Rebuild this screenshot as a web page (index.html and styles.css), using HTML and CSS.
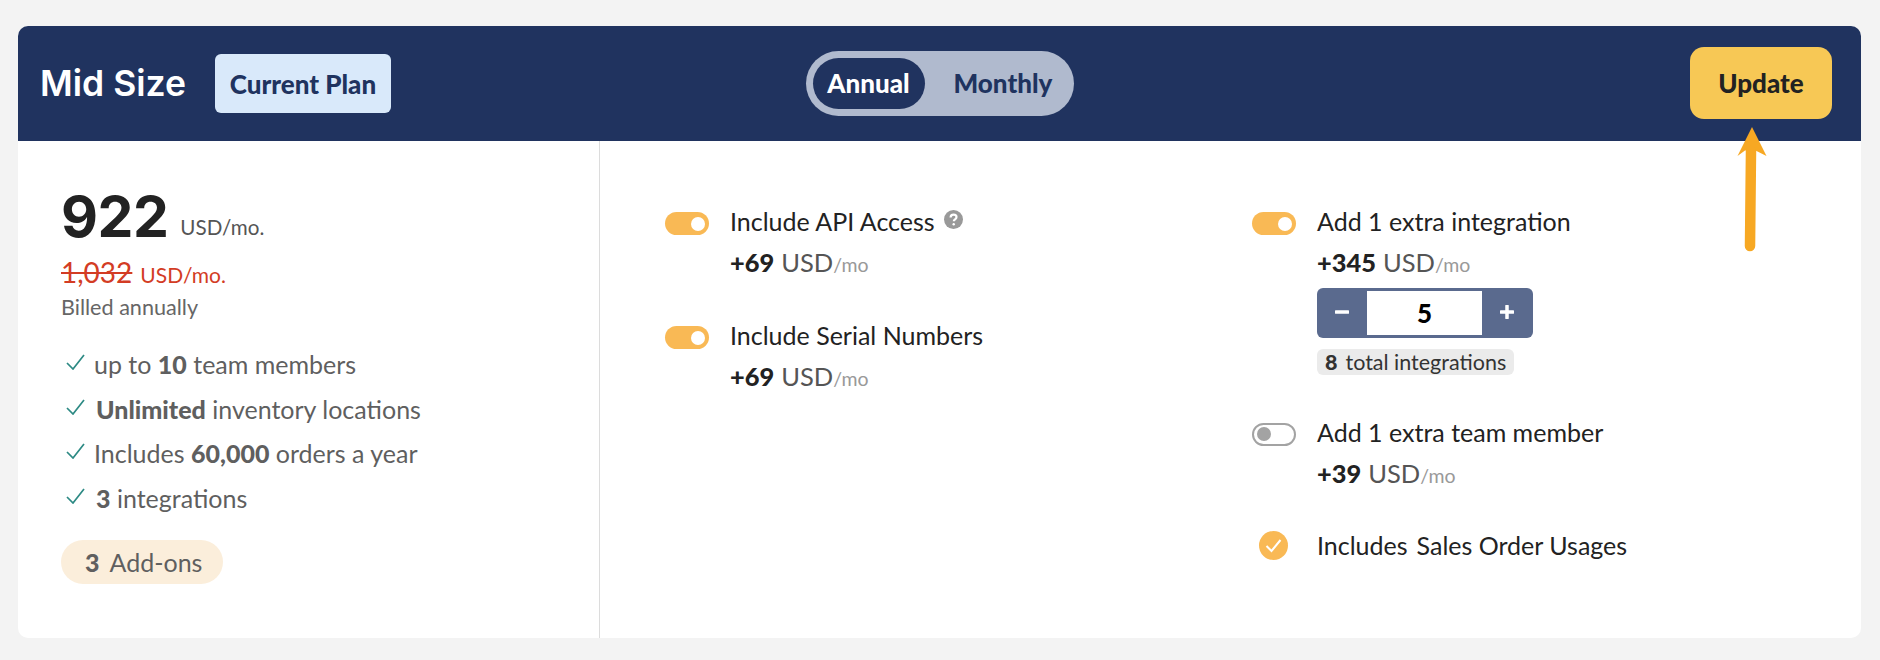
FILE: index.html
```html
<!DOCTYPE html>
<html lang="en">
<head>
<meta charset="utf-8">
<title>Mid Size plan</title>
<link rel="stylesheet" href="styles.css">
</head>
<body>
<main class="card">
  <header class="head">
    <div class="head-left">
      <h1 class="plan-name">Mid Size</h1>
      <span class="current">Current Plan</span>
    </div>
    <div class="period">
      <span class="period-opt is-on">Annual</span>
      <span class="period-opt">Monthly</span>
    </div>
    <button class="update">Update</button>
  </header>
  <div class="body">
    <section class="summary">
      <div class="price"><span class="amount">922</span><span class="unit">USD/mo.</span></div>
      <div class="old"><s class="old-num">1,032</s><span class="old-unit">USD/mo.</span></div>
      <div class="billed">Billed annually</div>
      <ul class="features">
        <li class="feature"><svg class="tick" viewBox="0 0 19 16"><path d="M1 9l6 6L18 1"/></svg><span>up to <b>10</b> team members</span></li>
        <li class="feature"><svg class="tick" viewBox="0 0 19 16"><path d="M1 9l6 6L18 1"/></svg><span class="nudge"><b>Unlimited</b> inventory locations</span></li>
        <li class="feature"><svg class="tick" viewBox="0 0 19 16"><path d="M1 9l6 6L18 1"/></svg><span>Includes <b>60,000</b> orders a year</span></li>
        <li class="feature"><svg class="tick" viewBox="0 0 19 16"><path d="M1 9l6 6L18 1"/></svg><span class="nudge"><b>3</b> integrations</span></li>
      </ul>
      <div class="addons"><b>3</b><span>Add-ons</span></div>
    </section>
    <section class="options">
      <div class="col">
        <div class="opt">
          <span class="sw on"></span>
          <div class="opt-main">
            <div class="opt-title">Include API Access<svg class="help" viewBox="0 0 19 19"><circle cx="9.5" cy="9.5" r="9.5"/><path d="M6.6 7.4c0-1.8 1.3-2.8 3-2.8s2.9 1 2.9 2.5c0 2.300-2.700 2.200-2.700 4.200" /><circle class="dot" cx="9.700" cy="14.300" r="1.200"/></svg></div>
            <div class="opt-price"><b>+69</b><span class="cur">USD</span><span class="per">/mo</span></div>
          </div>
        </div>
        <div class="opt">
          <span class="sw on"></span>
          <div class="opt-main">
            <div class="opt-title">Include Serial Numbers</div>
            <div class="opt-price"><b>+69</b><span class="cur">USD</span><span class="per">/mo</span></div>
          </div>
        </div>
      </div>
      <div class="col">
        <div class="opt">
          <span class="sw on"></span>
          <div class="opt-main">
            <div class="opt-title">Add 1 extra integration</div>
            <div class="opt-price"><b>+345</b><span class="cur">USD</span><span class="per">/mo</span></div>
            <div class="stepper">
              <span class="step"><svg class="step-ico" viewBox="0 0 14 14"><path d="M1 7h12"/></svg></span>
              <span class="step-val">5</span>
              <span class="step"><svg class="step-ico" viewBox="0 0 14 14"><path d="M1 7h12M7 1v12"/></svg></span>
            </div>
            <div class="total"><b>8</b><span>total integrations</span></div>
          </div>
        </div>
        <div class="opt">
          <span class="sw off"></span>
          <div class="opt-main">
            <div class="opt-title">Add 1 extra team member</div>
            <div class="opt-price"><b>+39</b><span class="cur">USD</span><span class="per">/mo</span></div>
          </div>
        </div>
        <div class="opt opt-inc">
          <span class="inc"><svg viewBox="0 0 29 29"><circle cx="14.500" cy="14.500" r="14.500"/><path d="M7.500 15l5 5L21.500 9"/></svg></span>
          <div class="opt-title inc-label"><span>Includes</span><span>Sales Order Usages</span></div>
        </div>
      </div>
    </section>
  </div>
  <svg class="arrow" viewBox="0 0 30 125"><path class="arrow-head" d="M15 0L29.500 29 18.500 23.500 8 23.500 0.500 29Z"/><path class="arrow-shaft" d="M14 24L13 119"/></svg>
</main>
</body>
</html>
```
FILE: styles.css
```css
* { box-sizing: border-box; }
html, body { margin: 0; height: 100%; }
body {
  background: #f3f3f3;
  padding: 26px 19px 22px 18px;
  font-family: Lato, "Open Sans", sans-serif;
  color: #222;
}
.card {
  position: relative;
  height: 612px;
  background: #fff;
  border-radius: 10px;
  display: flex;
  flex-direction: column;
  overflow: hidden;
}
.head {
  height: 115px;
  flex: none;
  background: #20335f;
  display: grid;
  grid-template-columns: 1fr auto 1fr;
  align-items: center;
  padding: 0 29px 0 22px;
}
.head-left { display: flex; align-items: center; gap: 29px; }
.plan-name {
  margin: 0;
  font: 600 35.500px/1 Inter, sans-serif;
  color: #fff;
  letter-spacing: 0;
}
.current {
  width: 176px;
  height: 59px;
  background: #d9e9fa;
  border-radius: 6px;
  display: flex;
  align-items: center;
  justify-content: center;
  font-weight: 900;
  font-size: 26px;
  color: #20335f;
}
.period {
  width: 268px;
  height: 65px;
  margin-left: 7px;
  background: #b0bace;
  border-radius: 33px;
  padding: 7px;
  display: flex;
  align-items: center;
}
.period-opt {
  font-weight: 900;
  font-size: 26px;
  color: #20335f;
  height: 51px;
  line-height: 51px;
  padding: 0 14px;
  border-radius: 26px;
  width: 112px;
  text-align: center;
  white-space: nowrap;
}
.period-opt.is-on { background: #20335f; color: #fff; margin-right: 15px; }
.update {
  justify-self: end;
  width: 142px;
  height: 72px;
  margin-top: -1px;
  border: 0;
  border-radius: 14px;
  background: #f7c855;
  font: 900 26px Lato, sans-serif;
  color: #222;
}
.body { flex: 1; display: flex; min-height: 0; }
.summary {
  width: 582px;
  flex: none;
  border-right: 1px solid #dcdcdc;
  padding: 47px 0 0 43px;
}
.price { display: flex; align-items: flex-end; height: 57px; }
.amount { font: 700 57px/57px Inter, sans-serif; color: #222; letter-spacing: -0.5px; }
.unit { font-size: 20.600px; line-height: 24px; color: #555; margin: 0 0 6px 12px; }
.old { display: flex; align-items: baseline; margin-top: 13px; color: #d33c24; line-height: 28px; height: 28px; }
.old-num { font-size: 28px; }
.old-unit { font-size: 21px; margin-left: 8px; }
.billed { font-size: 21.600px; color: #666; line-height: 24px; margin-top: 9px; }
.features { list-style: none; margin: 23px 0 0; padding: 0 0 0 5px; color: #5f5f5f; font-size: 25px; }
.feature { display: flex; align-items: center; height: 44.500px; gap: 9px; white-space: nowrap; }
.feature b { font-weight: 900; }
.nudge { margin-left: 2px; }
.tick { width: 19px; height: 16px; fill: none; stroke: #2d8a84; stroke-width: 1.700; margin-top: -4px; flex: none; }
.addons {
  width: 162px;
  height: 44px;
  margin-top: 20px;
  background: #fbeedb;
  border-radius: 22px;
  display: flex;
  align-items: center;
  gap: 10px;
  padding-left: 24px;
  color: #5f5f5f;
  font-size: 25px;
}
.addons b { font-weight: 900; }
.options {
  flex: 1;
  display: grid;
  grid-template-columns: 587px 1fr;
  padding: 63px 0 0 65px;
  align-content: start;
}
.col { display: flex; flex-direction: column; }
.opt { display: flex; gap: 21px; margin-bottom: 36px; }
.sw {
  width: 44px;
  height: 23px;
  margin-top: 8px;
  flex: none;
  border-radius: 12px;
  position: relative;
}
.sw::after {
  content: "";
  position: absolute;
  width: 14px;
  height: 14px;
  border-radius: 50%;
  top: 4.500px;
}
.sw.on { background: #f9b955; }
.sw.on::after { background: #fff; right: 4px; }
.sw.off { border: 2.500px solid #a3a3a3; background: #fff; }
.sw.off::after { background: #a3a3a3; left: 3px; top: 2px; }
.opt-title {
  font-size: 25px;
  line-height: 34px;
  color: #222;
  display: flex;
  white-space: pre;
}
.inc-label { gap: 9px; }
.help { width: 19px; height: 19px; margin: 6px 0 0 9px; flex: none; }
.help circle { fill: #999; }
.help path { fill: none; stroke: #fff; stroke-width: 2.200; }
.help .dot { fill: #fff; }
.opt-price { font-size: 25.400px; line-height: 34px; margin-top: 7px; display: flex; align-items: baseline; }
.opt-price b { font-weight: 900; color: #222; }
.cur { color: #555; margin-left: 7px; font-size: 25.500px; }
.per { color: #999; font-size: 19.500px; }
.stepper {
  width: 216px;
  height: 50px;
  margin-top: 6px;
  background: #5a6a8e;
  border-radius: 6px;
  padding: 3px 0 3px;
  display: flex;
  align-items: stretch;
}
.step { width: 50px; flex: none; display: flex; align-items: center; justify-content: center; margin-top: -2px; }
.step-ico { width: 14px; height: 14px; fill: none; stroke: #fff; stroke-width: 3.500; stroke-linecap: round; }
.step-val {
  width: 115px;
  background: #fff;
  text-align: center;
  font-weight: 900;
  font-size: 26px;
  line-height: 44px;
  color: #000;
}
.total {
  width: fit-content;
  height: 26px;
  margin-top: 11px;
  margin-bottom: 4px;
  background: #ebebeb;
  border-radius: 6px;
  padding: 0 8px;
  display: flex;
  align-items: center;
  gap: 8px;
  font-size: 21.500px;
  color: #333;
}
.total b { font-weight: 900; }
.opt-inc { align-items: center; gap: 29px; margin: -1px 0 0; }
.inc { width: 29px; height: 29px; margin-left: 7px; flex: none; display: block; }
.inc svg { display: block; width: 29px; height: 29px; }
.inc circle { fill: #f9b955; }
.inc path { fill: none; stroke: #fff; stroke-width: 2; }
.arrow {
  position: absolute;
  left: 1719px;
  top: 101px;
  width: 30px;
  height: 125px;
}
.arrow-head { fill: #f7a823; }
.arrow-shaft { fill: none; stroke: #f7a823; stroke-width: 10.500; stroke-linecap: round; }
```
